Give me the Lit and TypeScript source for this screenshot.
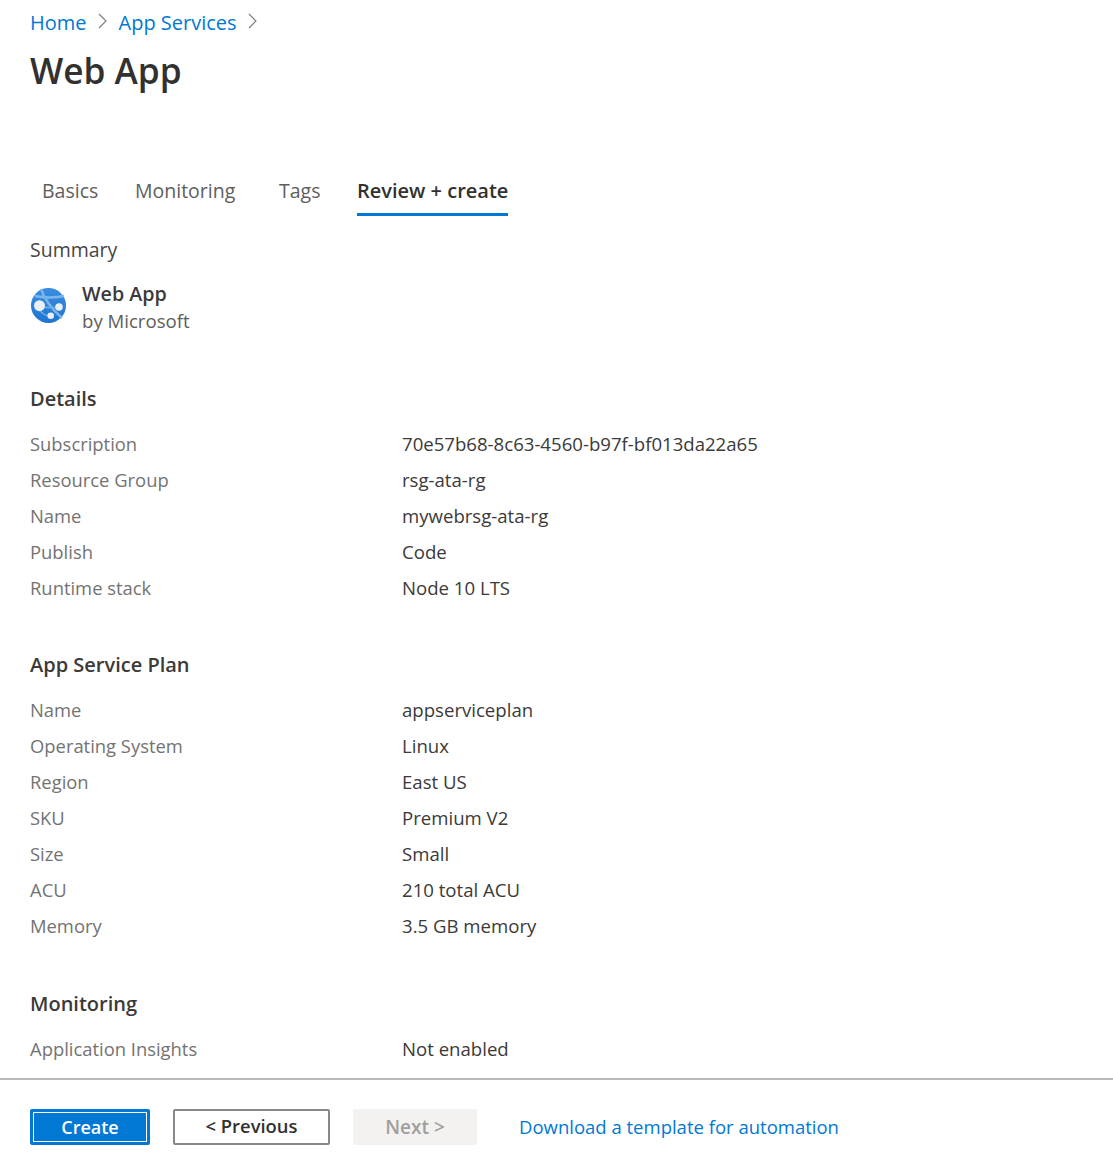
import { LitElement, html, css } from 'lit';
import { customElement } from 'lit/decorators.js';

interface Section {
  title: string;
  rows: Array<[string, string]>;
}

const SECTIONS: Array<Section> = [
  {
    title: 'Details',
    rows: [
      ['Subscription', '70e57b68-8c63-4560-b97f-bf013da22a65'],
      ['Resource Group', 'rsg-ata-rg'],
      ['Name', 'mywebrsg-ata-rg'],
      ['Publish', 'Code'],
      ['Runtime stack', 'Node 10 LTS'],
    ],
  },
  {
    title: 'App Service Plan',
    rows: [
      ['Name', 'appserviceplan'],
      ['Operating System', 'Linux'],
      ['Region', 'East US'],
      ['SKU', 'Premium V2'],
      ['Size', 'Small'],
      ['ACU', '210 total ACU'],
      ['Memory', '3.5 GB memory'],
    ],
  },
  {
    title: 'Monitoring',
    rows: [['Application Insights', 'Not enabled']],
  },
];

const chevron = html`<svg class="chevron" width="9" height="16" viewBox="0 0 9 16">
  <path d="M1 1l7 7-7 7" fill="none" stroke="#7a7a7a" stroke-width="1.1" />
</svg>`;

@customElement('app-root')
export class AppRoot extends LitElement {
  static override styles = css`
    :host {
      display: flex;
      flex-direction: column;
      height: 1157px;
      overflow: hidden;
      background: #fff;
      color: #3b3a39;
      font-family: 'Open Sans', sans-serif;
      font-size: 18.6px;
    }
    .main {
      flex: 1;
      min-height: 0;
      padding: 9px 30px 0;
    }
    .crumbs {
      display: flex;
      align-items: center;
      height: 26px;
      font-size: 20px;
      color: #0078d4;
    }
    .crumbs .chevron {
      margin: -2px 12px 0 11px;
    }
    h1 {
      margin: 5px 0 0;
      font-size: 35.2px;
      line-height: 60px;
      font-weight: 600;
      color: #323130;
    }
    .tabs {
      display: grid;
      grid-template-columns: 93px 144px 78px auto;
      justify-content: start;
      margin: 72px 0 0 12px;
      height: 46px;
      font-size: 19.5px;
    }
    .tab {
      line-height: 37px;
      color: #605e5c;
    }
    .tab.active {
      height: 41px;
      font-size: 20px;
      color: #323130;
      font-weight: 600;
      border-bottom: 3px solid #0078d4;
      box-sizing: content-box;
    }
    .summary {
      margin-top: 19px;
      font-size: 19.5px;
      line-height: 26px;
      color: #484644;
    }
    .product {
      display: flex;
      align-items: flex-start;
      gap: 16px;
      margin-top: 17px;
    }
    .product svg {
      margin: 8px 0 0 1px;
    }
    .product b {
      display: block;
      font-size: 19.7px;
      font-weight: 600;
      line-height: 27px;
    }
    .product span {
      display: block;
      line-height: 27px;
      color: #605e5c;
    }
    .section {
      margin-top: 44px;
    }
    .product + .section {
      margin-top: 50px;
    }
    .section:last-child {
      margin-top: 45px;
    }
    h2 {
      margin: 0 0 12px;
      font-size: 20px;
      font-weight: 600;
      line-height: 30px;
    }
    .row {
      display: grid;
      grid-template-columns: 372px 1fr;
      height: 36px;
      line-height: 36px;
    }
    .row .label {
      font-size: 18.4px;
      color: #737373;
    }
    .footer {
      display: flex;
      align-items: flex-start;
      height: 79px;
      padding: 29px 30px 0;
      border-top: 2px solid #b9b9b9;
      box-sizing: border-box;
    }
    .btn {
      display: flex;
      align-items: center;
      justify-content: center;
      box-sizing: border-box;
      height: 36px;
      font-size: 18px;
      font-weight: 600;
      border-radius: 2px;
    }
    .create {
      width: 120px;
      background: #0078d4;
      color: #fff;
      border: 3px solid #0078d4;
      box-shadow: inset 0 0 0 1px #fff;
    }
    .previous {
      width: 157px;
      margin-left: 23px;
      border: 2px solid #8a8886;
      color: #323130;
      font-size: 18.4px;
      line-height: 30px;
      padding-bottom: 2px;
    }
    .next {
      width: 124px;
      margin-left: 23px;
      background: #f3f2f1;
      color: #a19f9d;
      font-size: 19px;
    }
    .download {
      margin-left: 42px;
      font-size: 18.5px;
      line-height: 36px;
      color: #0078d4;
    }
  `;

  private renderIcon() {
    return html`<svg width="35" height="35" viewBox="0 0 35 35">
      <defs>
        <linearGradient id="globe" x1="0" y1="0" x2="0" y2="1">
          <stop offset="0" stop-color="#3a8ee0" />
          <stop offset="1" stop-color="#1f74d0" />
        </linearGradient>
      </defs>
      <circle cx="17.5" cy="17.5" r="17.5" fill="url(#globe)" />
      <path d="M4 8Q18 11 33 8M10 1Q15 16 31 30" fill="none" stroke="#7ab5ec" stroke-width="2.4" />
      <path d="M9 18Q18 21 28 19M9 22Q12 28 20 28" fill="none" stroke="#69ace8" stroke-width="1.6" />
      <circle cx="8.5" cy="17.7" r="5.5" fill="#ebeff4" />
      <circle cx="28" cy="19" r="3.8" fill="#ebeff4" />
      <circle cx="19.7" cy="27.7" r="3.3" fill="#ebeff4" />
    </svg>`;
  }

  override render() {
    return html`
      <div class="main">
        <div class="crumbs">
          <span>Home</span>${chevron}<span>App Services</span>${chevron}
        </div>
        <h1>Web App</h1>
        <div class="tabs">
          <div class="tab">Basics</div>
          <div class="tab">Monitoring</div>
          <div class="tab">Tags</div>
          <div class="tab active">Review + create</div>
        </div>
        <div class="summary">Summary</div>
        <div class="product">
          ${this.renderIcon()}
          <div><b>Web App</b><span>by Microsoft</span></div>
        </div>
        ${SECTIONS.map(
          (s) => html`<div class="section">
            <h2>${s.title}</h2>
            ${s.rows.map(
              ([label, value]) => html`<div class="row">
                <span class="label">${label}</span><span>${value}</span>
              </div>`
            )}
          </div>`
        )}
      </div>
      <div class="footer">
        <div class="btn create">Create</div>
        <div class="btn previous">&lt; Previous</div>
        <div class="btn next">Next &gt;</div>
        <div class="download">Download a template for automation</div>
      </div>
    `;
  }
}
